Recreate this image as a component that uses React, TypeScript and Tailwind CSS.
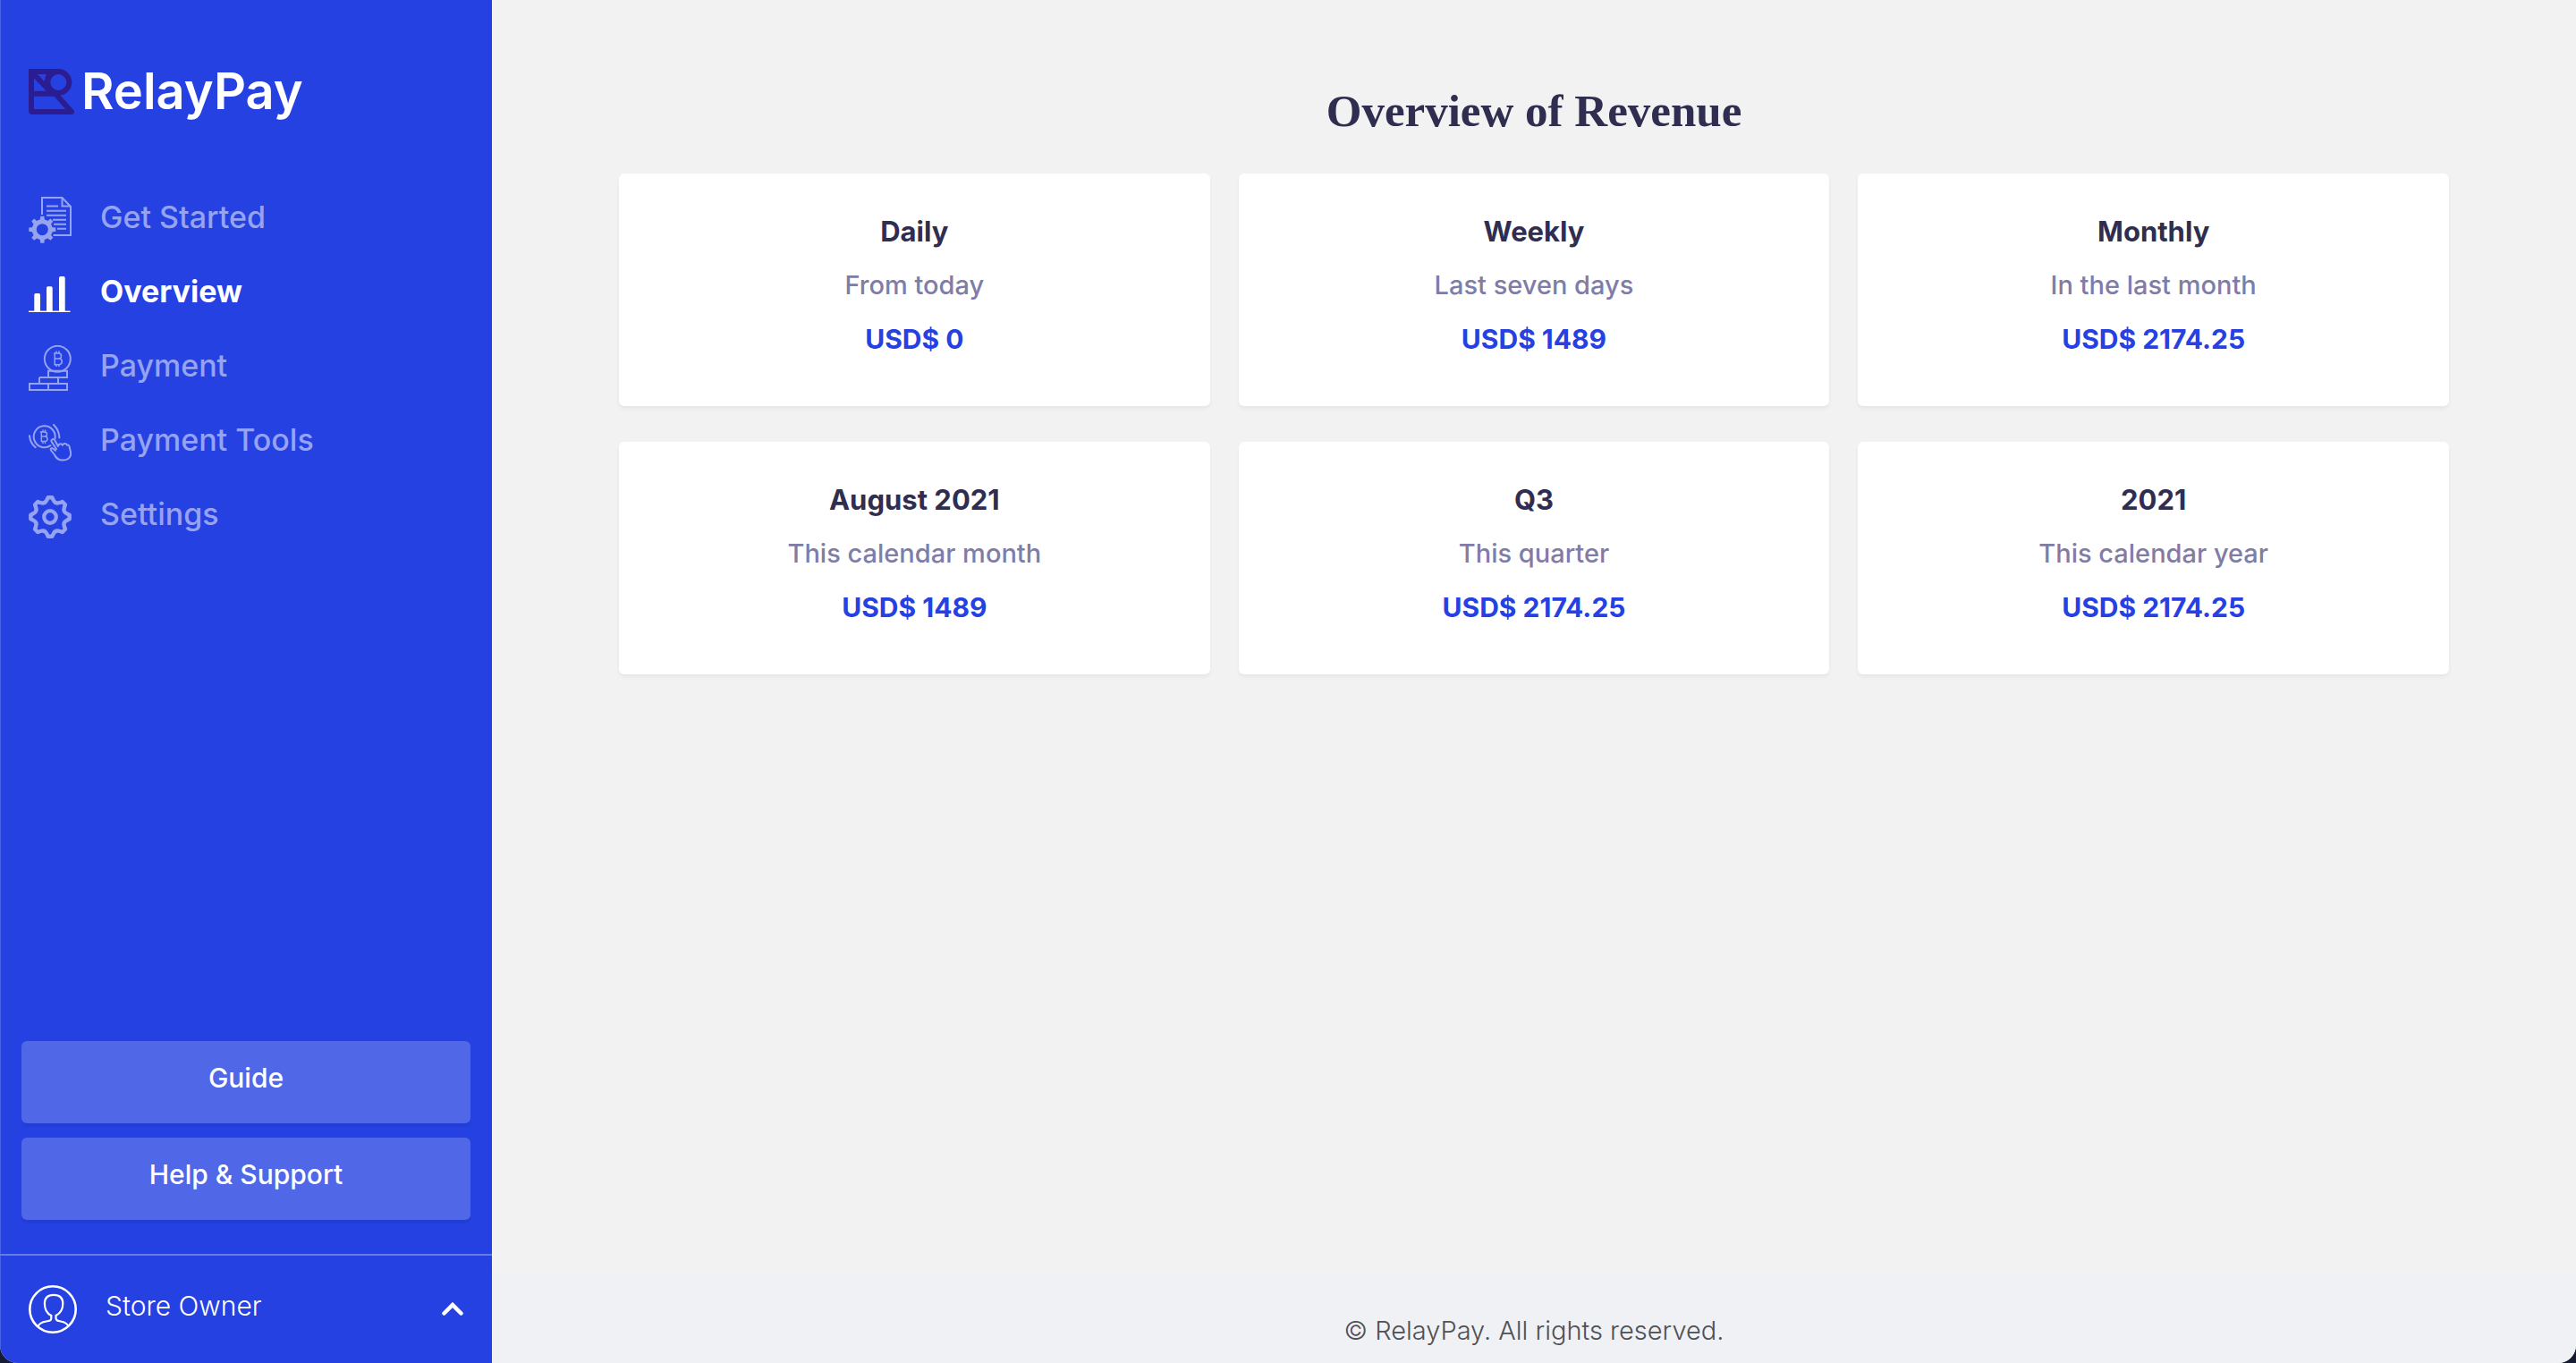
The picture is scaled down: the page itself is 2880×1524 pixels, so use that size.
import type { ReactNode } from "react";

function LogoMark() {
  return (
    <svg width="51" height="51" viewBox="0 0 51 51" fill="none" stroke="#2b1d91" strokeWidth="6" aria-hidden="true">
      <path d="M34 3H3V46.5Q3 48 4.500 48H48L30 28" strokeLinejoin="round" />
      <path d="M0 6V0H6Z" fill="#2b1d91" stroke="none" />
      <path d="M3 27.800H34" />
      <path d="M4 4L24 25" />
      <path d="M23.500 3C21.500 6 20 9 20 15V24" strokeWidth="4" />
      <circle cx="33.300" cy="15" r="12" />
    </svg>
  );
}

const toothAngles = [0, 45, 90, 135, 180, 225, 270, 315];

function DocumentGearIcon() {
  return (
    <svg width="48" height="52" viewBox="0 0 48 52" fill="none" stroke="currentColor" strokeWidth="2" aria-hidden="true">
      <path d="M15 20V1H37.500L47 11V43H27.500" />
      <path d="M37.500 1V10.500H47" />
      <path d="M20 10.500H33M20 15.700H42M20 20.700H42M27 25.700H42M28 30.700H42M32 35.700H42" />
      <circle cx="15.300" cy="36.700" r="9" strokeWidth="5" />
      {toothAngles.map((angle) => (
        <path
          key={angle}
          d="M12.600 27L13.200 21.700H17.400L18 27Z"
          fill="currentColor"
          stroke="none"
          transform={`rotate(${angle} 15.300 36.700)`}
        />
      ))}
    </svg>
  );
}

function BarsIcon() {
  return (
    <svg width="48" height="40" viewBox="0 0 48 40" fill="currentColor" aria-hidden="true">
      <path d="M6.300 39V20.500Q6.300 19 8 19H11.300Q13 19 13 20.500V39Z" />
      <path d="M20 39V13Q20 11.300 21.700 11.300H25Q26.700 11.300 26.700 13V39Z" />
      <path d="M34 39V1.700Q34 0 35.700 0H39Q40.700 0 40.700 1.700V39Z" />
      <rect x="0" y="38.600" width="46.500" height="1.400" />
    </svg>
  );
}

function CoinStackIcon() {
  return (
    <svg width="48" height="52" viewBox="0 0 48 52" fill="none" stroke="currentColor" strokeWidth="2" aria-hidden="true">
      <circle cx="32.300" cy="15.300" r="14.500" />
      <path
        d="M29.200 9V21.700H34.500A3.400 3.400 0 0 0 34.500 15H29.200H33.500A3 3 0 0 0 33.500 9H28M31 6.500V9M34 6.500V9M31 21.700V24M34 21.700V24"
        strokeWidth="1.500"
      />
      <path d="M22 28.800H43V36H22ZM12 36V43M12 36H43M33 36V43M43 43H1V50H43ZM22 43V50" />
    </svg>
  );
}

function CoinTapIcon() {
  return (
    <svg
      width="48"
      height="42"
      viewBox="0 0 48 42"
      fill="none"
      stroke="currentColor"
      strokeWidth="2"
      strokeLinecap="round"
      strokeLinejoin="round"
      aria-hidden="true"
    >
      <path d="M24.500 24.200A12 12 0 1 1 29.600 16" />
      <path
        d="M14.300 9V19.500H18.800A2.800 2.800 0 0 0 18.800 14H14.300H18A2.500 2.500 0 0 0 18 9H13.300M16 7V9M18.500 7V9M16 19.500V21.500M18.500 19.500V21.500"
        strokeWidth="1.400"
      />
      <path d="M1 13.300C1.500 18.500 3.500 22.800 7.700 26.200M28 1C32 5 34.300 9.800 34.400 15.500" />
      <path d="M31 28L25.600 19.800C24.800 17 28 16 29.400 18.500L33 25C33 22 36.500 21.600 37.800 23.600C39.500 21.300 42.300 21.600 43 23.700C44 23 45.300 24 45.600 25.500L47 31.500C48 37 44 40.600 38 40.600C33 40.600 30.500 38 29 34.500L25 29.500C24 27.800 25.500 26.500 27.200 27.500L30 29.800" />
    </svg>
  );
}

const point = (radius: number, degrees: number) => {
  const a = (degrees * Math.PI) / 180;
  return `${(24 + radius * Math.cos(a)).toFixed(2)} ${(24 + radius * Math.sin(a)).toFixed(2)}`;
};

const gearOutline =
  toothAngles
    .map(
      (a, i) =>
        `${i === 0 ? "M" : "L"}${point(21.8, a - 6)}L${point(21.8, a + 6)}L${point(18.8, a + 12)}Q${point(15.6, a + 22.5)} ${point(18.8, a + 33)}`,
    )
    .join("") + "Z";

function SettingsIcon() {
  return (
    <svg width="48" height="48" viewBox="0 0 48 48" fill="none" stroke="currentColor" aria-hidden="true">
      <path d={gearOutline} strokeWidth="4.400" strokeLinejoin="round" />
      <circle cx="24" cy="24" r="6.800" strokeWidth="4.200" />
    </svg>
  );
}

function AvatarIcon() {
  return (
    <svg width="54" height="54" viewBox="0 0 54 54" fill="none" stroke="currentColor" aria-hidden="true">
      <circle cx="27" cy="27" r="25.700" strokeWidth="2.600" />
      <path
        d="M10.500 46C12 42.500 15 41.200 19.500 40.500C23.500 39.900 25.300 39.500 25.300 37V34C20 31.500 17.900 26 17.900 20.500C17.900 13.500 21.500 10.800 28 10.800C34.500 10.800 38.300 13.500 38.300 20.500C38.300 26 35.500 31.500 30.500 34V37C30.500 39.500 32.500 39.900 36 40.500C40 41.200 43 42.500 44.500 46"
        strokeWidth="2.200"
      />
    </svg>
  );
}

function ChevronUpIcon() {
  return (
    <svg width="24" height="16" viewBox="0 0 24 16" fill="none" stroke="currentColor" aria-hidden="true">
      <path d="M2.500 12.500L12 3L21.500 12.500" strokeWidth="4.500" strokeLinecap="round" />
    </svg>
  );
}

const navItems: { label: string; icon: ReactNode; active?: boolean }[] = [
  { label: "Get Started", icon: <DocumentGearIcon /> },
  { label: "Overview", icon: <BarsIcon />, active: true },
  { label: "Payment", icon: <CoinStackIcon /> },
  { label: "Payment Tools", icon: <CoinTapIcon /> },
  { label: "Settings", icon: <SettingsIcon /> },
];

const cards = [
  { title: "Daily", note: "From today", amount: "USD$ 0" },
  { title: "Weekly", note: "Last seven days", amount: "USD$ 1489" },
  { title: "Monthly", note: "In the last month", amount: "USD$ 2174.25" },
  { title: "August 2021", note: "This calendar month", amount: "USD$ 1489" },
  { title: "Q3", note: "This quarter", amount: "USD$ 2174.25" },
  { title: "2021", note: "This calendar year", amount: "USD$ 2174.25" },
];

function Sidebar() {
  return (
    <aside className="flex w-[550px] shrink-0 flex-col bg-[#2541e2] text-white shadow-[inset_1px_0_0_#4a62e8]">
      <a href="#" className="flex items-center gap-2 px-8 pt-16 pb-16 text-[56px] leading-[76px] font-semibold">
        <LogoMark />
        <span>RelayPay</span>
      </a>
      <nav>
        {navItems.map((item) => (
          <a
            key={item.label}
            href="#"
            aria-current={item.active ? "page" : undefined}
            className={
              item.active
                ? "flex h-[83px] items-center gap-8 px-8 font-bold"
                : "flex h-[83px] items-center gap-8 px-8 font-medium text-[#96a3f1]"
            }
          >
            {item.icon}
            <span className="pb-[6px] text-[34px] leading-10">{item.label}</span>
          </a>
        ))}
      </nav>
      <div className="mt-auto flex flex-col gap-4 px-6 pb-[38px]">
        {["Guide", "Help & Support"].map((label) => (
          <button
            key={label}
            type="button"
            className="h-[92px] rounded-md bg-[#5067e8] pb-[10px] text-[30px] font-medium shadow-[0_4px_2px_rgba(0,0,0,0.06)]"
          >
            {label}
          </button>
        ))}
      </div>
      <button type="button" className="flex h-[122px] items-center border-t-2 border-[#667aea] px-8 text-left">
        <AvatarIcon />
        <span className="flex-1 pb-2 pl-8 text-[30px] font-light">Store Owner</span>
        <ChevronUpIcon />
      </button>
    </aside>
  );
}

export default function App() {
  return (
    <div className="bg-[#161c33] font-['Inter',sans-serif]">
      <div className="flex min-h-screen overflow-hidden rounded-b-[20px] bg-[#f2f2f2]">
        <Sidebar />
        <div className="flex flex-1 flex-col">
          <main className="flex-1 px-[142px] pt-[92px]">
            <h1 className="mb-[38px] text-center font-['Liberation_Serif',serif] text-[51px] leading-[64px] font-bold text-[#2f2e50]">
              Overview of Revenue
            </h1>
            <div className="grid grid-cols-3 gap-x-8 gap-y-10">
              {cards.map((card) => (
                <section
                  key={card.title}
                  className="rounded-md bg-white pt-[35px] pb-[45px] text-center leading-[60px] shadow-[0_3px_4px_rgba(0,0,0,0.05)]"
                >
                  <h2 className="text-[31px] font-bold text-[#2f2e50]">{card.title}</h2>
                  <p className="text-[29px] font-medium text-[#7f7da8]">{card.note}</p>
                  <p className="text-[30px] font-bold text-[#2541e2]">{card.amount}</p>
                </section>
              ))}
            </div>
          </main>
          <footer className="bg-[#f0f1f5] pt-[46px] pb-4 text-center text-[29px] leading-10 font-light text-[#4f5054]">
            © RelayPay. All rights reserved.
          </footer>
        </div>
      </div>
    </div>
  );
}
